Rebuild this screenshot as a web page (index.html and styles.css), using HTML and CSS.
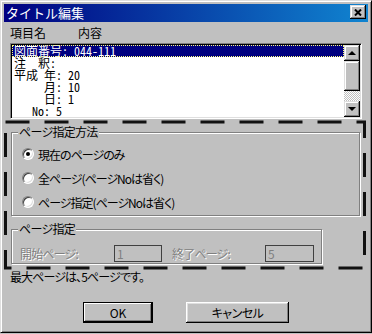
FILE: index.html
```html
<!DOCTYPE html>
<html lang="ja">
<head>
    <meta charset="UTF-8">
    <meta name="viewport" content="width=device-width, initial-scale=1.0">
    <title>タイトル編集</title>
    <link rel="stylesheet" href="styles.css">
</head>
<body>
    <div class="dialog">
        <div class="titlebar">
            <span class="title-text">タイトル編集</span>
            <button class="close-btn" aria-label="閉じる">
                <svg width="8" height="7" viewBox="0 0 8 7"><path d="M1 0.5l6 6M7 0.5l-6 6" stroke="#000" stroke-width="2" fill="none"/></svg>
            </button>
        </div>

        <div class="dialog-body">
            <div class="columns">
                <span class="col-name">項目名</span>
                <span>内容</span>
            </div>

            <div class="listbox">
                <div class="list-items">
                    <div class="item selected">図面番号: 044-111</div>
                    <div class="item">注　釈:</div>
                    <div class="item">平成 年: 20</div>
                    <div class="item">　　 月: 10</div>
                    <div class="item">　　 日: 1</div>
                    <div class="item">   No: 5</div>
                </div>
                <div class="scrollbar">
                    <div class="sb-btn"><span class="arrow up"></span></div>
                    <div class="sb-thumb"></div>
                    <div class="sb-track"></div>
                    <div class="sb-btn"><span class="arrow down"></span></div>
                </div>
            </div>

            <div class="focus-area">
                <div class="group group-method">
                    <div class="group-title">ページ指定方法</div>
                    <div class="radio-list">
                        <div class="radio-row"><span class="radio checked"></span>現在のページのみ</div>
                        <div class="radio-row"><span class="radio"></span>全ページ(ページNoは省く)</div>
                        <div class="radio-row"><span class="radio"></span>ページ指定(ページNoは省く)</div>
                    </div>
                </div>

                <div class="group group-range">
                    <div class="group-title">ページ指定</div>
                    <div class="range-row">
                        <span class="disabled-label start-label">開始ページ:</span>
                        <span class="edit start-edit">1</span>
                        <span class="disabled-label end-label">終了ページ:</span>
                        <span class="edit end-edit">5</span>
                    </div>
                </div>

                <!-- keyboard focus rectangle drawn over the option groups -->
                <svg class="focus-rect" width="362" height="150" viewBox="0 0 362 150">
                    <rect x="1.5" y="2" width="359" height="146" fill="none" stroke="#111" stroke-width="3" stroke-dasharray="24 15"/>
                </svg>
            </div>

            <div class="max-page">最大ページは、5ページです。</div>

            <div class="buttons">
                <button class="btn default-btn">OK</button>
                <button class="btn cancel-btn">キャンセル</button>
            </div>
        </div>
    </div>
</body>
</html>
```

FILE: styles.css
```css
html, body {
    margin: 0;
    padding: 0;
    background: #c0c0c0;
}
body {
    font-family: "Noto Sans CJK JP", "Noto Sans", sans-serif;
    font-size: 12px;
    color: #000;
}
.dialog {
    box-sizing: border-box;
    width: 372px;
    height: 333px;
    padding: 3px;
    background: #c0c0c0;
    border: 1px solid;
    border-color: #dfdfdf #000 #000 #dfdfdf;
    box-shadow: inset 1px 1px #fff, inset -1px -1px #808080;
}
.titlebar {
    display: flex;
    justify-content: space-between;
    height: 18px;
    padding: 0 2px;
    background: linear-gradient(to right, #000080, #1084d0);
}
.title-text {
    color: #fff;
    font-size: 13px;
    line-height: 18px;
}
.close-btn {
    display: flex;
    align-items: center;
    justify-content: center;
    width: 16px;
    height: 14px;
    margin-top: 1px;
    padding: 0;
    border: none;
    background: #c0c0c0;
    box-shadow: inset -1px -1px #000, inset 1px 1px #dfdfdf, inset -2px -2px #808080, inset 2px 2px #fff;
}
.dialog-body {
    padding: 0 6px;
    font-feature-settings: "palt";
}
.columns {
    display: flex;
    margin-top: 4px;
    height: 14px;
    line-height: 14px;
}
.col-name {
    width: 68px;
}
.listbox {
    box-sizing: border-box;
    display: flex;
    height: 76px;
    margin-top: 3px;
    padding: 1px;
    background: #fff;
    border: 1px solid;
    border-color: #808080 #fff #fff #808080;
    box-shadow: inset 1px 1px #000, inset -1px -1px #dfdfdf;
}
.list-items {
    flex: 1;
    font-family: "Noto Sans Mono CJK JP", "Noto Sans CJK JP", monospace;
    font-feature-settings: normal;
}
.item {
    height: 12px;
    line-height: 12px;
    padding-left: 2px;
    white-space: pre;
}
.item.selected {
    background: #000080;
    color: #fff;
    outline: 1px dotted #ffff80;
    outline-offset: -1px;
}
.scrollbar {
    display: flex;
    flex-direction: column;
    width: 16px;
}
.sb-btn, .sb-thumb {
    background: #c0c0c0;
    box-shadow: inset -1px -1px #000, inset 1px 1px #dfdfdf, inset -2px -2px #808080, inset 2px 2px #fff;
}
.sb-btn {
    display: flex;
    align-items: center;
    justify-content: center;
    height: 16px;
}
.sb-thumb {
    height: 30px;
}
.sb-track {
    flex: 1;
    background: repeating-conic-gradient(#c0c0c0 0 25%, #fff 0 50%) 0 0 / 2px 2px;
}
.arrow {
    width: 0;
    height: 0;
    border-left: 4px solid transparent;
    border-right: 4px solid transparent;
}
.arrow.up {
    border-bottom: 4px solid #000;
}
.arrow.down {
    border-top: 4px solid #000;
}
.focus-area {
    position: relative;
    width: 362px;
    margin: 1px 0 0 -6px;
    padding: 12px 0 6px 7px;
    box-sizing: border-box;
}
.focus-rect {
    position: absolute;
    left: 0;
    top: 0;
    pointer-events: none;
}
.group {
    box-sizing: border-box;
    border: 1px solid #808080;
    box-shadow: inset 1px 1px #fff, 1px 1px #fff;
}
.group-title {
    width: fit-content;
    margin: -8px 0 0 6px;
    padding: 0 1px;
    line-height: 14px;
    letter-spacing: -0.7px;
    background: #c0c0c0;
}
.group-method {
    width: 349px;
    height: 84px;
}
.radio-list {
    margin-top: 3px;
    padding-left: 10px;
}
.radio-row {
    display: flex;
    align-items: center;
    gap: 4px;
    height: 24px;
    letter-spacing: -1px;
}
.radio {
    box-sizing: border-box;
    display: flex;
    align-items: center;
    justify-content: center;
    width: 12px;
    height: 12px;
    border-radius: 50%;
    background: #fff;
    border: 1px solid;
    border-color: #808080 #fff #fff #808080;
    box-shadow: inset 1px 1px 0 #404040, inset -1px -1px 0 #dfdfdf;
}
.radio.checked::after {
    content: "";
    width: 4px;
    height: 4px;
    border-radius: 50%;
    background: #000;
}
.group-range {
    width: 311px;
    height: 35px;
    margin-top: 13px;
}
.range-row {
    display: flex;
    align-items: center;
    margin-top: 9px;
    padding-left: 8px;
}
.disabled-label {
    color: #808080;
    text-shadow: 1px 1px #fff;
    letter-spacing: -0.8px;
}
.start-label {
    width: 94px;
}
.end-label {
    width: 93px;
    margin-left: 10px;
}
.edit {
    box-sizing: border-box;
    height: 17px;
    padding-left: 2px;
    line-height: 15px;
    color: #808080;
    border: 1px solid #404040;
}
.start-edit {
    width: 48px;
}
.end-edit {
    width: 49px;
}
.max-page {
    height: 14px;
    line-height: 14px;
    letter-spacing: -0.9px;
}
.buttons {
    display: flex;
    gap: 33px;
    margin-top: 18px;
    padding-left: 73px;
}
.btn {
    height: 21px;
    padding: 0;
    font-family: inherit;
    font-size: 12px;
    font-feature-settings: "palt";
    color: #000;
    background: #c0c0c0;
    border: none;
    box-shadow: inset -1px -1px #000, inset 1px 1px #fff, inset -2px -2px #808080, inset 2px 2px #dfdfdf;
}
.default-btn {
    width: 70px;
    box-shadow: inset 0 0 0 1px #000, inset -2px -2px #000, inset 2px 2px #fff, inset -3px -3px #808080;
}
.cancel-btn {
    width: 103px;
    letter-spacing: -0.5px;
}
```
